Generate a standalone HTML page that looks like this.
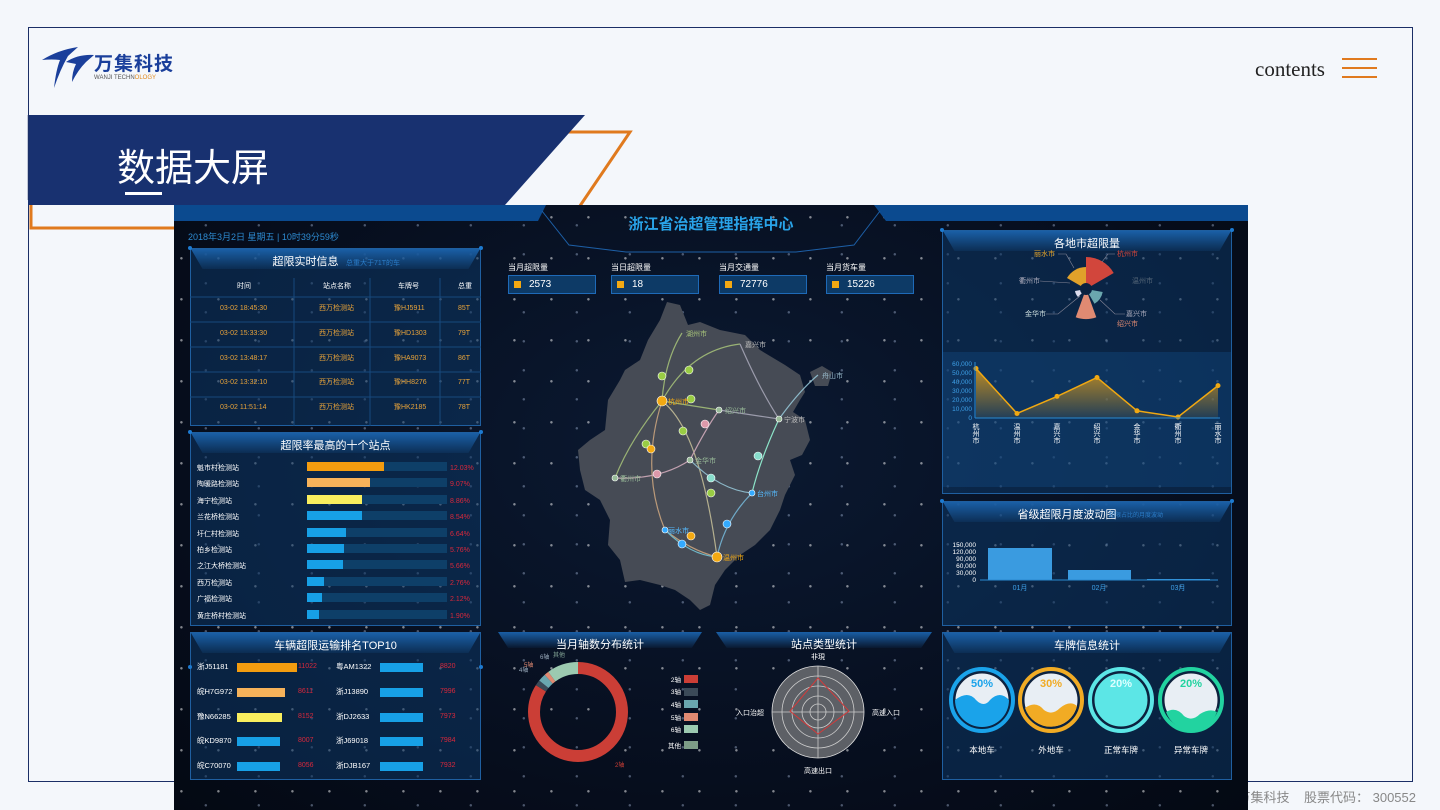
<!DOCTYPE html>
<html><head><meta charset="utf-8">
<style>
*{margin:0;padding:0;box-sizing:border-box}
body{width:1440px;height:810px;background:#f4f7fb;position:relative;overflow:hidden;font-family:"Liberation Sans","Noto Sans CJK SC",sans-serif}
.abs{position:absolute}
.frame{position:absolute;left:28px;top:27px;width:1385px;height:755px;border:1.5px solid #1b2f66}
#scr{position:absolute;left:174px;top:205px;width:1074px;height:605px;overflow:hidden;
background:
radial-gradient(circle at 20% 30%,rgba(255,255,255,.5) 0 1px,transparent 1.5px) 0 0/37px 41px,
radial-gradient(circle at 60% 70%,rgba(200,220,255,.35) 0 1px,transparent 1.5px) 0 0/53px 29px,
radial-gradient(ellipse at 50% 40%,#0b1a33 0%,#060d1c 70%,#040913 100%);}
.panel{position:absolute;background:rgba(12,55,100,.55);border:1px solid #1f5fa0}
.ph{position:absolute;left:0;right:0;top:0;height:20px;background:linear-gradient(#1a5fa6,rgba(20,80,140,.2));clip-path:polygon(0 0,100% 0,96% 100%,4% 100%)}
.pt{position:absolute;left:0;right:0;top:4px;text-align:center;color:#fff;font-size:11px}
.t{position:absolute;font-size:7px;white-space:nowrap}
</style></head><body>
<div class="frame"></div>

<!-- logo -->
<svg class="abs" style="left:38px;top:42px" width="60" height="50" viewBox="0 0 60 50">
<path d="M4 18 Q20 8 40 5 L30 14 Q22 28 16 46 Q18 28 22 18 Q14 17 4 18Z" fill="#1a3f9b"/>
<path d="M28 20 Q40 12 56 13 L48 20 Q40 28 34 40 Q34 30 38 22 Q33 21 28 20Z" fill="#1a3f9b"/>
</svg>
<div class="abs" style="left:94px;top:52px;font-size:19px;font-weight:bold;color:#1a3f9b;letter-spacing:1px;line-height:22px;font-family:'Noto Sans CJK SC',sans-serif">万集科技</div>
<div class="abs" style="left:94px;top:75px;font-size:6px;line-height:7px;color:#555">WANJI TECHN<span style="color:#e08a1e">OLOGY</span></div>

<div class="abs" style="left:1255px;top:57px;font-family:'Liberation Serif',serif;font-size:21px;color:#222">contents</div>
<div class="abs" style="left:1342px;top:58px;width:35px;height:2px;background:#e07a1e"></div>
<div class="abs" style="left:1342px;top:67px;width:35px;height:2px;background:#e07a1e"></div>
<div class="abs" style="left:1342px;top:76px;width:35px;height:2px;background:#e07a1e"></div>

<svg class="abs" style="left:0;top:0" width="700" height="240">
<polygon points="31,132 630,132 565,228 31,228" fill="none" stroke="#e07a1e" stroke-width="3"/>
<polygon points="28,115 585,115 505,205 28,205" fill="#183170"/>
<line x1="28.5" y1="115" x2="28.5" y2="200" stroke="#1b2f66" stroke-width="1.5"/>
</svg>
<div class="abs" style="left:117px;top:142px;font-size:38px;color:#fff;font-family:'Noto Sans CJK SC',sans-serif;line-height:46px">数据大屏</div>
<div class="abs" style="left:125px;top:192px;width:37px;height:3px;background:#fff"></div>

<div class="abs" style="left:1100px;top:787px;font-size:13px;color:#888;width:316px;text-align:right;font-family:'Liberation Sans','Noto Sans CJK SC',sans-serif">万集科技&nbsp;&nbsp;&nbsp;&nbsp;股票代码： 300552</div>

<div id="scr">
 <svg class="abs" style="left:0;top:0" width="1074" height="60">
  <polygon points="0,0 372,0 364,16 0,16" fill="#0b4a8f"/>
  <polygon points="700,0 1074,0 1074,16 712,16" fill="#0b4a8f"/>
  <polyline points="368,6 395,40 452,47 622,47 680,40 706,6" fill="none" stroke="#1d5fa6" stroke-width="1"/>
 </svg>
 <div class="abs" style="left:0;width:1074px;top:8px;text-align:center;font-size:15px;font-weight:bold;color:#29a3e8;font-family:'Noto Sans CJK SC',sans-serif">浙江省治超管理指挥中心</div>
 <div class="t" style="left:14px;top:25px;font-size:9px;color:#2d8ad0">2018年3月2日 星期五 | 10时39分59秒</div>

 <div class="panel" style="left:16px;top:43px;width:291px;height:178px">
  <div class="ph"></div><div class="pt" style="left:-60px">超限实时信息</div>
  <div class="t" style="left:155px;top:9px;color:#2a7cc8">总重大于71T的车</div>
  <div class="t" style="left:46px;top:32px;color:#fff">时间</div><div class="t" style="left:132px;top:32px;color:#fff">站点名称</div><div class="t" style="left:207px;top:32px;color:#fff">车牌号</div><div class="t" style="left:267px;top:32px;color:#fff">总重</div>
 </div>
 <div class="t" style="left:46px;top:92px;color:#e8a33a;line-height:24.8px">03-02 18:45:30<br>03-02 15:33:30<br>03-02 13:48:17<br>03-02 13:32:10<br>03-02 11:51:14</div>
 <div class="t" style="left:145px;top:92px;color:#e8a33a;line-height:24.8px">西万检测站<br>西万检测站<br>西万检测站<br>西万检测站<br>西万检测站</div>
 <div class="t" style="left:220px;top:92px;color:#e8a33a;line-height:24.8px">豫HJ5911<br>豫HD1303<br>豫HA9073<br>豫HH8276<br>豫HK2185</div>
 <div class="t" style="left:284px;top:92px;color:#e8a33a;line-height:24.8px">85T<br>79T<br>86T<br>77T<br>78T</div>
 <svg class="abs" style="left:16px;top:43px" width="291" height="178"><g stroke="#17497d" stroke-width="1">
  <line x1="0" y1="49" x2="291" y2="49"/><line x1="0" y1="74" x2="291" y2="74"/><line x1="0" y1="99" x2="291" y2="99"/><line x1="0" y1="124" x2="291" y2="124"/><line x1="0" y1="149" x2="291" y2="149"/>
  <line x1="104" y1="30" x2="104" y2="178"/><line x1="180" y1="30" x2="180" y2="178"/><line x1="250" y1="30" x2="250" y2="178"/></g></svg>

 <div class="panel" style="left:16px;top:227px;width:291px;height:194px">
  <div class="ph"></div><div class="pt">超限率最高的十个站点</div>
 </div>

 <div class="panel" style="left:16px;top:427px;width:291px;height:148px">
  <div class="ph"></div><div class="pt">车辆超限运输排名TOP10</div>
 </div>

 <div class="t" style="left:334px;top:57px;color:#fff;font-size:8px">当月超限量</div>
 <div class="t" style="left:437px;top:57px;color:#fff;font-size:8px">当日超限量</div>
 <div class="t" style="left:545px;top:57px;color:#fff;font-size:8px">当月交通量</div>
 <div class="t" style="left:652px;top:57px;color:#fff;font-size:8px">当月货车量</div>
 <div class="abs" style="left:334px;top:70px;width:88px;height:19px;border:1px solid #1e6ab8;background:#0d3a66"><i class="abs" style="left:5px;top:5px;width:7px;height:7px;background:#f3a912"></i><span class="t" style="left:20px;top:3px;color:#fff;font-size:10px">2573</span></div>
 <div class="abs" style="left:437px;top:70px;width:88px;height:19px;border:1px solid #1e6ab8;background:#0d3a66"><i class="abs" style="left:5px;top:5px;width:7px;height:7px;background:#f3a912"></i><span class="t" style="left:20px;top:3px;color:#fff;font-size:10px">18</span></div>
 <div class="abs" style="left:545px;top:70px;width:88px;height:19px;border:1px solid #1e6ab8;background:#0d3a66"><i class="abs" style="left:5px;top:5px;width:7px;height:7px;background:#f3a912"></i><span class="t" style="left:20px;top:3px;color:#fff;font-size:10px">72776</span></div>
 <div class="abs" style="left:652px;top:70px;width:88px;height:19px;border:1px solid #1e6ab8;background:#0d3a66"><i class="abs" style="left:5px;top:5px;width:7px;height:7px;background:#f3a912"></i><span class="t" style="left:20px;top:3px;color:#fff;font-size:10px">15226</span></div>

 <svg class="abs" style="left:0;top:0" width="1074" height="605">
  <g transform="translate(-174,-205)">
  <polygon fill="#464b55" points="667,302 680,305 688,325 700,322 720,330 745,335 760,350 785,365 800,375 805,392 800,400 793,412 805,420 810,440 802,455 790,460 795,475 785,495 780,510 770,530 755,545 740,555 725,570 715,585 710,605 700,610 690,600 675,590 660,585 640,580 625,582 620,560 608,545 610,520 600,500 585,490 580,470 578,450 590,440 605,430 608,400 620,380 625,370 640,360 648,340 660,320"/>
  <polygon fill="#464b55" points="810,372 822,366 832,372 828,386 815,386"/>
  <g fill="none" stroke-width="1.2" opacity=".85">
   <path d="M662,401 Q665,360 682,333" stroke="#a8c47a"/>
   <path d="M662,401 Q690,350 740,344" stroke="#a8c47a"/>
   <path d="M662,401 L719,410" stroke="#a8c47a"/>
   <path d="M662,401 Q700,430 717,557" stroke="#c9c29a"/>
   <path d="M662,401 Q630,440 615,478" stroke="#a8c47a"/>
   <path d="M662,401 Q640,470 665,530 Q690,550 717,557" stroke="#d0a880"/>
   <path d="M740,344 Q760,390 779,419" stroke="#aab"/>
   <path d="M719,410 L779,419" stroke="#aab"/>
   <path d="M779,419 Q760,460 752,493" stroke="#9fd"/>
   <path d="M779,419 Q800,390 818,375" stroke="#9cd"/>
   <path d="M615,478 Q660,480 690,460 Q705,430 719,410" stroke="#d8b0c0"/>
   <path d="M690,460 Q720,490 752,493" stroke="#9cd"/>
   <path d="M752,493 Q725,520 717,557" stroke="#7bd"/>
   <path d="M665,530 Q690,555 717,557" stroke="#7cd"/>
  </g>
  <g stroke="#fff" stroke-width=".6">
   <circle cx="662" cy="401" r="5" fill="#f3a912"/><circle cx="717" cy="557" r="5" fill="#f3a912"/>
   <circle cx="662" cy="376" r="4" fill="#9c4"/><circle cx="689" cy="370" r="4" fill="#9c4"/><circle cx="691" cy="399" r="4" fill="#9c4"/>
   <circle cx="683" cy="431" r="4" fill="#9c4"/><circle cx="646" cy="444" r="4" fill="#9c4"/><circle cx="651" cy="449" r="4" fill="#f3a912"/>
   <circle cx="705" cy="424" r="4" fill="#d9a"/><circle cx="657" cy="474" r="4" fill="#d9a"/><circle cx="711" cy="493" r="4" fill="#9c4"/>
   <circle cx="758" cy="456" r="4" fill="#8dc"/><circle cx="711" cy="478" r="4" fill="#8dc"/><circle cx="727" cy="524" r="4" fill="#3af"/>
   <circle cx="691" cy="536" r="4" fill="#f3a912"/><circle cx="682" cy="544" r="4" fill="#3af"/>
   <circle cx="719" cy="410" r="3" fill="#9b9"/><circle cx="690" cy="460" r="3" fill="#9b9"/><circle cx="615" cy="478" r="3" fill="#9b9"/><circle cx="779" cy="419" r="3" fill="#9b9"/><circle cx="752" cy="493" r="3" fill="#3af"/><circle cx="665" cy="530" r="3" fill="#3af"/>
  </g>
  <g font-size="7" font-family="Noto Sans CJK SC,sans-serif">
   <text x="686" y="336" fill="#a8c47a">湖州市</text><text x="745" y="347" fill="#bbb">嘉兴市</text><text x="822" y="378" fill="#9bc">舟山市</text>
   <text x="668" y="404" fill="#f3a912">杭州市</text><text x="725" y="413" fill="#9b9">绍兴市</text><text x="784" y="422" fill="#bbb">宁波市</text>
   <text x="695" y="463" fill="#9b9">金华市</text><text x="620" y="481" fill="#9b9">衢州市</text><text x="757" y="496" fill="#5bf">台州市</text>
   <text x="668" y="533" fill="#5bf">丽水市</text><text x="723" y="560" fill="#f3a912">温州市</text>
  </g>
  </g>
 </svg>

 <div class="panel" style="left:768px;top:25px;width:290px;height:264px">
  <div class="ph"></div><div class="pt">各地市超限量</div>
  <div class="abs" style="left:0;top:121px;width:100%;height:135px;background:rgba(20,80,140,.35)"></div>
 </div>
 <div class="panel" style="left:768px;top:296px;width:290px;height:125px">
  <div class="ph"></div><div class="pt" style="left:-40px">省级超限月度波动图</div>
  <div class="t" style="left:166px;top:8px;color:#2a7cc8;font-size:6px">超限占比的月度波动</div>
 </div>
 <div class="panel" style="left:768px;top:427px;width:290px;height:148px">
  <div class="ph"></div><div class="pt">车牌信息统计</div>
 </div>
 <div class="abs" style="left:324px;top:427px;width:204px;height:16px;background:linear-gradient(#1a5fa6,rgba(20,80,140,.1));clip-path:polygon(0 0,100% 0,95% 100%,5% 100%)"></div>
 <div class="pt" style="left:324px;width:204px;top:431px;position:absolute">当月轴数分布统计</div>
 <div class="abs" style="left:542px;top:427px;width:216px;height:16px;background:linear-gradient(#1a5fa6,rgba(20,80,140,.1));clip-path:polygon(0 0,100% 0,95% 100%,5% 100%)"></div>
 <div class="pt" style="left:542px;width:216px;top:431px;position:absolute">站点类型统计</div>

 <svg class="abs" style="left:0;top:0" width="1074" height="605" font-family="Liberation Sans,Noto Sans CJK SC,sans-serif">
 <g transform="translate(-174,-205)">
  <path d="M1086,289 L1086,257 A32,32 0 0 1 1113.7,273 Z" fill="#d2463c"/>
  <path d="M1086,289 L1067,278 A22,22 0 0 1 1086,267 Z" fill="#e0a12a"/>
  <path d="M1086,289 L1102.7,292 A17,17 0 0 1 1094.5,303.7 Z" fill="#6aa7ae"/>
  <path d="M1086,289 L1096.3,317.2 A30,30 0 0 1 1075.7,317.2 Z" fill="#e08a72"/>
  <path d="M1086,289 L1078,297 A11,11 0 0 1 1075,291 Z" fill="#dde"/>
  <circle cx="1086" cy="289" r="6" fill="#0a2140"/>
  <g font-size="7">
  <text x="1034" y="256" fill="#e0a12a">丽水市</text><text x="1117" y="256" fill="#d2463c">杭州市</text>
  <text x="1019" y="283" fill="#aab">衢州市</text><text x="1132" y="283" fill="#567">温州市</text>
  <text x="1025" y="316" fill="#cdd">金华市</text><text x="1126" y="316" fill="#aab">嘉兴市</text><text x="1117" y="326" fill="#e08a72">绍兴市</text></g>
  <g stroke="#889" stroke-width=".6" fill="none"><path d="M1058,254 L1066,254 L1074,268"/><path d="M1115,254 L1108,254 L1102,262"/><path d="M1040,281 L1070,283"/><path d="M1046,314 L1058,314 L1080,296"/><path d="M1125,314 L1115,314 L1100,300"/></g>
  <defs><linearGradient id="lg" x1="0" y1="0" x2="0" y2="1"><stop offset="0" stop-color="#d99a1a" stop-opacity=".85"/><stop offset="1" stop-color="#d99a1a" stop-opacity=".1"/></linearGradient></defs>
  <polygon points="976,368.5 1017,413.5 1057,396.4 1097,377.5 1137,410.8 1178,417 1218,385.6 1218,418 976,418" fill="url(#lg)"/>
  <polyline points="976,368.5 1017,413.5 1057,396.4 1097,377.5 1137,410.8 1178,417 1218,385.6" fill="none" stroke="#f0a812" stroke-width="1.5"/>
  <g fill="#f0a812"><circle cx="976" cy="368.5" r="2.5"/><circle cx="1017" cy="413.5" r="2.5"/><circle cx="1057" cy="396.4" r="2.5"/><circle cx="1097" cy="377.5" r="2.5"/><circle cx="1137" cy="410.8" r="2.5"/><circle cx="1178" cy="417" r="2.5"/><circle cx="1218" cy="385.6" r="2.5"/></g>
  <line x1="975" y1="418" x2="1220" y2="418" stroke="#2a8ad0"/><line x1="975" y1="362" x2="975" y2="418" stroke="#2a8ad0"/>
  <g font-size="6.5" fill="#3ea0e8" text-anchor="end"><text x="972" y="366">60,000</text><text x="972" y="375">50,000</text><text x="972" y="384">40,000</text><text x="972" y="393">30,000</text><text x="972" y="402">20,000</text><text x="972" y="411">10,000</text><text x="972" y="420">0</text></g>
  <g font-size="7" fill="#fff" text-anchor="middle">
   <text x="976" y="429">杭</text><text x="976" y="436">州</text><text x="976" y="443">市</text>
   <text x="1017" y="429">温</text><text x="1017" y="436">州</text><text x="1017" y="443">市</text>
   <text x="1057" y="429">嘉</text><text x="1057" y="436">兴</text><text x="1057" y="443">市</text>
   <text x="1097" y="429">绍</text><text x="1097" y="436">兴</text><text x="1097" y="443">市</text>
   <text x="1137" y="429">金</text><text x="1137" y="436">华</text><text x="1137" y="443">市</text>
   <text x="1178" y="429">衢</text><text x="1178" y="436">州</text><text x="1178" y="443">市</text>
   <text x="1218" y="429">丽</text><text x="1218" y="436">水</text><text x="1218" y="443">市</text></g>
  <g font-size="6.5" fill="#fff" text-anchor="end"><text x="976" y="547">150,000</text><text x="976" y="554">120,000</text><text x="976" y="561">90,000</text><text x="976" y="568">60,000</text><text x="976" y="575">30,000</text><text x="976" y="582">0</text></g>
  <rect x="988" y="548" width="64" height="32" fill="#3a9be0"/><rect x="1068" y="570" width="63" height="10" fill="#3a9be0"/><rect x="1147" y="579" width="63" height="1" fill="#3a9be0"/>
  <line x1="980" y1="580" x2="1218" y2="580" stroke="#2a8ad0"/>
  <g font-size="7" fill="#3ea0e8" text-anchor="middle"><text x="1020" y="590">01月</text><text x="1099" y="590">02月</text><text x="1178" y="590">03月</text></g>
  <g transform="rotate(-90 578 712)" fill="none" stroke-width="12">
   <circle cx="578" cy="712" r="44" stroke="#cb3e36" stroke-dasharray="232 300"/>
   <circle cx="578" cy="712" r="44" stroke="#3b4a58" stroke-dasharray="0 232 5 300"/>
   <circle cx="578" cy="712" r="44" stroke="#6aa7b0" stroke-dasharray="0 237 7 300"/>
   <circle cx="578" cy="712" r="44" stroke="#e08a72" stroke-dasharray="0 244 4 300"/>
   <circle cx="578" cy="712" r="44" stroke="#9ccab0" stroke-dasharray="0 248 29 300"/>
  </g>
  <g font-size="6"><text x="540" y="659" fill="#9ab">6轴</text><text x="553" y="657" fill="#8a9">其他</text><text x="524" y="667" fill="#e08a72">5轴</text><text x="519" y="672" fill="#9ab">4轴</text><text x="615" y="767" fill="#cb3e36">2轴</text></g>
  <g font-size="6.5" fill="#fff" text-anchor="end"><text x="681" y="682">2轴</text><text x="681" y="694">3轴</text><text x="681" y="707">4轴</text><text x="681" y="720">5轴</text><text x="681" y="732">6轴</text><text x="681" y="748">其他</text></g>
  <rect x="684" y="675" width="14" height="8" fill="#cb3e36"/><rect x="684" y="688" width="14" height="8" fill="#3b4a58"/><rect x="684" y="700" width="14" height="8" fill="#6aa7b0"/><rect x="684" y="713" width="14" height="8" fill="#e08a72"/><rect x="684" y="725" width="14" height="8" fill="#9ccab0"/><rect x="684" y="741" width="14" height="8" fill="#7c9c86"/>
  <circle cx="818" cy="712" r="46" fill="#5d6066" stroke="#ddd" stroke-width=".8"/>
  <g fill="none" stroke="#ccc" stroke-width=".8"><circle cx="818" cy="712" r="36"/><circle cx="818" cy="712" r="26"/><circle cx="818" cy="712" r="16"/><circle cx="818" cy="712" r="8"/><line x1="772" y1="712" x2="864" y2="712"/><line x1="818" y1="666" x2="818" y2="758"/></g>
  <polygon points="818,678 849,711 818,734 790,711" fill="none" stroke="#d23a3a" stroke-width="1"/>
  <g font-size="7" fill="#fff" text-anchor="middle"><text x="818" y="659">非現</text><text x="750" y="715">入口治超</text><text x="886" y="715">高速入口</text><text x="818" y="773">高速出口</text></g>
  <g>
   <circle cx="982" cy="700" r="31" fill="none" stroke="#1aa3ea" stroke-width="4"/><circle cx="982" cy="700" r="27" fill="#e8eef4" stroke="#10203a" stroke-width="1"/>
   <path d="M955,700 Q968,690 976,700 Q984,708 990,700 Q1000,690 1009,700 A27 27 0 0 1 955,700Z" fill="#1aa3ea"/>
   <circle cx="1051" cy="700" r="31" fill="none" stroke="#f1ab24" stroke-width="4"/><circle cx="1051" cy="700" r="27" fill="#e8eef4" stroke="#10203a"/>
   <path d="M1025,708 Q1036,700 1044,710 Q1052,716 1060,708 Q1070,700 1077,706 A27 27 0 0 1 1025,708Z" fill="#f1ab24"/>
   <circle cx="1121" cy="700" r="31" fill="none" stroke="#5ce6e6" stroke-width="4"/><circle cx="1121" cy="700" r="27" fill="#5ce6e6" stroke="#10203a"/>
   <circle cx="1191" cy="700" r="31" fill="none" stroke="#22d3a0" stroke-width="4"/><circle cx="1191" cy="700" r="27" fill="#e8eef4" stroke="#10203a"/>
   <path d="M1166,712 Q1176,706 1184,716 Q1192,722 1200,714 Q1210,708 1217,712 A27 27 0 0 1 1166,712Z" fill="#22d3a0"/>
   <g font-size="11" font-weight="bold" text-anchor="middle"><text x="982" y="687" fill="#1aa3ea">50%</text><text x="1051" y="687" fill="#f1ab24">30%</text><text x="1121" y="687" fill="#dff">20%</text><text x="1191" y="687" fill="#22d3a0">20%</text></g>
   <g font-size="8.5" fill="#fff" text-anchor="middle"><text x="982" y="753">本地车</text><text x="1051" y="753">外地车</text><text x="1121" y="753">正常车牌</text><text x="1191" y="753">异常车牌</text></g>
  </g>
  <g fill="#1d7ad0"><circle cx="190" cy="248" r="2"/><circle cx="481" cy="248" r="2"/><circle cx="190" cy="432" r="2"/><circle cx="481" cy="432" r="2"/><circle cx="942" cy="230" r="2"/><circle cx="1232" cy="230" r="2"/><circle cx="942" cy="501" r="2"/><circle cx="1232" cy="501" r="2"/><circle cx="190" cy="667" r="2"/><circle cx="481" cy="667" r="2"/></g>
 </g>
 </svg>

 <div class="t" style="left:23px;top:256px;color:#fff;line-height:16.4px;font-size:7px">魁市村检测站<br>陶暖路检测站<br>海宁检测站<br>兰花桥检测站<br>圩仁村检测站<br>柏乡检测站<br>之江大桥检测站<br>西万检测站<br>广福检测站<br>黄庄桥村检测站</div>
 <div class="t" style="left:276px;top:256px;color:#d8283c;line-height:16.4px;font-size:7px">12.03%<br>9.07%<br>8.86%<br>8.54%<br>6.64%<br>5.76%<br>5.66%<br>2.76%<br>2.12%<br>1.90%</div>
 <div class="abs" style="left:133px;top:257px">
  <div class="abs" style="top:0;width:140px;height:9px;background:#0e3f68"></div><div class="abs" style="top:0;width:77px;height:9px;background:#f39c0f"></div>
  <div class="abs" style="top:16.4px;width:140px;height:9px;background:#0e3f68"></div><div class="abs" style="top:16.4px;width:63px;height:9px;background:#f6b25a"></div>
  <div class="abs" style="top:32.8px;width:140px;height:9px;background:#0e3f68"></div><div class="abs" style="top:32.8px;width:55px;height:9px;background:#f9ee5e"></div>
  <div class="abs" style="top:49.2px;width:140px;height:9px;background:#0e3f68"></div><div class="abs" style="top:49.2px;width:55px;height:9px;background:#17a0e6"></div>
  <div class="abs" style="top:65.6px;width:140px;height:9px;background:#0e3f68"></div><div class="abs" style="top:65.6px;width:39px;height:9px;background:#17a0e6"></div>
  <div class="abs" style="top:82px;width:140px;height:9px;background:#0e3f68"></div><div class="abs" style="top:82px;width:37px;height:9px;background:#17a0e6"></div>
  <div class="abs" style="top:98.4px;width:140px;height:9px;background:#0e3f68"></div><div class="abs" style="top:98.4px;width:36px;height:9px;background:#17a0e6"></div>
  <div class="abs" style="top:114.8px;width:140px;height:9px;background:#0e3f68"></div><div class="abs" style="top:114.8px;width:17px;height:9px;background:#17a0e6"></div>
  <div class="abs" style="top:131.2px;width:140px;height:9px;background:#0e3f68"></div><div class="abs" style="top:131.2px;width:15px;height:9px;background:#17a0e6"></div>
  <div class="abs" style="top:147.6px;width:140px;height:9px;background:#0e3f68"></div><div class="abs" style="top:147.6px;width:12px;height:9px;background:#17a0e6"></div>
 </div>

 <div class="t" style="left:23px;top:450px;color:#fff;line-height:24.8px;font-size:7.5px">浙J51181<br>皖H7G972<br>豫N66285<br>皖KD9870<br>皖C70070</div>
 <div class="t" style="left:162px;top:450px;color:#fff;line-height:24.8px;font-size:7.5px">粤AM1322<br>浙J13890<br>浙DJ2633<br>浙J69018<br>浙DJB167</div>
 <div class="t" style="left:124px;top:450px;color:#d8283c;line-height:24.8px;font-size:7px">11022<br>8611<br>8152<br>8007<br>8056</div>
 <div class="t" style="left:266px;top:450px;color:#d8283c;line-height:24.8px;font-size:7px">8820<br>7996<br>7973<br>7984<br>7932</div>
 <div class="abs" style="left:63px;top:458px">
  <div class="abs" style="top:0;width:60px;height:9px;background:#f39c0f"></div>
  <div class="abs" style="top:24.8px;width:48px;height:9px;background:#f6b25a"></div>
  <div class="abs" style="top:49.6px;width:45px;height:9px;background:#f9ee5e"></div>
  <div class="abs" style="top:74.4px;width:43px;height:9px;background:#17a0e6"></div>
  <div class="abs" style="top:99.2px;width:43px;height:9px;background:#17a0e6"></div>
 </div>
 <div class="abs" style="left:206px;top:458px">
  <div class="abs" style="top:0;width:43px;height:9px;background:#17a0e6"></div>
  <div class="abs" style="top:24.8px;width:43px;height:9px;background:#17a0e6"></div>
  <div class="abs" style="top:49.6px;width:43px;height:9px;background:#17a0e6"></div>
  <div class="abs" style="top:74.4px;width:43px;height:9px;background:#17a0e6"></div>
  <div class="abs" style="top:99.2px;width:43px;height:9px;background:#17a0e6"></div>
 </div>
</div>
</body></html>
